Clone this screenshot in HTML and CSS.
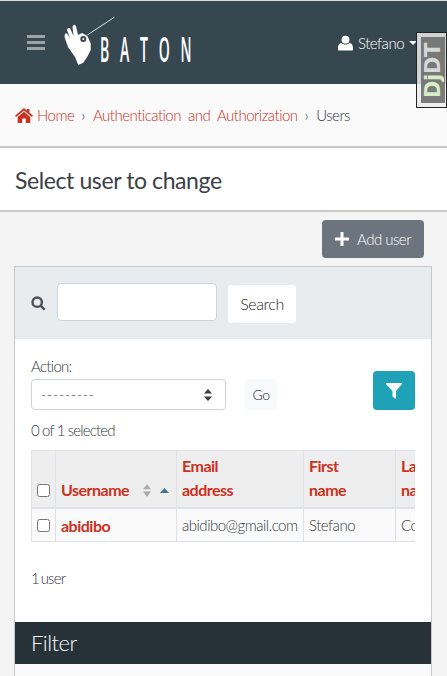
FILE: index.html
```html
<!DOCTYPE html>
<html lang="en">
<head>
    <meta charset="UTF-8">
    <meta name="viewport" content="width=device-width, initial-scale=1.0">
    <title>Select user to change</title>
    <link rel="stylesheet" href="styles.css">
</head>
<body>
    <nav class="navbar">
        <svg class="burger" viewBox="0 0 18 15" aria-hidden="true">
            <path d="M0 0h18v3H0zM0 6h18v3H0zM0 12h18v3H0z"/>
        </svg>
        <div class="logo">
            <svg class="logo-mark" viewBox="0 0 52 52" aria-hidden="true">
                <path class="logo-hand" fill-rule="evenodd" d="M14.300 51 L11 43 L4 33 L.5 23 L1 19.500 L3 19.500 L6 24 L3 16 L4 14 L6 14 L9.500 22 L8.500 12.500 L10 10.500 L12 12 L14 21 L18 19 L23.300 22 L26.700 29.300 L26.700 36 L23.300 42.700 L19.300 48.700 Z M16.300 25 A3 3 0 1 0 22.300 25 A3 3 0 1 0 16.300 25 Z"/>
                <circle class="logo-hand" cx="19.300" cy="25" r="1"/>
                <path class="logo-baton" d="M23.300 21 L50.300 3.300"/>
            </svg>
            <span class="logo-text">BATON</span>
        </div>
        <div class="user-menu">
            <svg class="user-icon" viewBox="0 0 16 16" aria-hidden="true">
                <circle cx="8" cy="4.400" r="4.200"/>
                <path d="M1 16 C0 16 0 15 0 14 C0 11 1 8.200 3.800 8 C5 9 6.400 9.600 8 9.600 C9.600 9.600 11 9 12.200 8 C15 8.200 16 11 16 14 C16 15 16 16 15 16 Z"/>
            </svg>
            <span>Stefano</span>
            <i class="caret"></i>
        </div>
    </nav>

    <div class="djdt"><span class="djdt-inner"><b>Dj</b>DT</span></div>

    <div class="breadcrumbs">
        <svg class="home-icon" viewBox="0 0 18 15" aria-hidden="true">
            <path d="M9 0 L11.800 2.400 V1 H14.400 V4.600 L18 7.700 L16.900 9 L9 2.400 L1.100 9 L0 7.700 Z M9 3.700 L15.300 9 V15 H10.800 V10.600 H7.200 V15 H2.700 V9 Z"/>
        </svg>
        <a href="#">Home</a>
        <span class="sep">›</span>
        <a href="#" class="wide">Authentication and Authorization</a>
        <span class="sep">›</span>
        <span>Users</span>
    </div>

    <header class="page-title">
        <h1>Select user to change</h1>
    </header>

    <main class="content">
        <div class="tools">
            <a href="#" class="btn-add">
                <svg viewBox="0 0 14 14" aria-hidden="true"><path d="M5.500 0h3v5.500H14v3H8.500V14h-3V8.500H0v-3h5.500z"/></svg>
                Add user
            </a>
        </div>

        <section class="card">
            <form class="search-bar">
                <svg class="search-icon" viewBox="0 0 15 15" aria-hidden="true">
                    <circle cx="6.200" cy="6.200" r="4.700"/>
                    <path d="M9.800 9.800 L13.600 13.600"/>
                </svg>
                <input type="text" class="search-input">
                <button type="button" class="btn-search">Search</button>
            </form>

            <div class="changelist">
                <div class="actions-row">
                    <div class="action-field">
                        <label for="action">Action:</label>
                        <div class="select" id="action">
                            <span>---------</span>
                            <svg viewBox="0 0 8 12" aria-hidden="true"><path d="M4 0 L8 4.500 H0 Z M0 7.500 H8 L4 12 Z"/></svg>
                        </div>
                    </div>
                    <button type="button" class="btn-go">Go</button>
                    <button type="button" class="btn-filter" aria-label="Filter">
                        <svg viewBox="0 0 16 16" aria-hidden="true"><path d="M0 0 H16 V1 L10 8 V16 L6.500 13.500 V8 L0 1 Z"/></svg>
                    </button>
                </div>
                <p class="counter">0 of 1 selected</p>

                <div class="table-wrap">
                    <table class="result-list">
                        <thead>
                            <tr>
                                <th class="col-check"><input type="checkbox"></th>
                                <th class="col-user">
                                    <div class="sort-head">
                                        <span>Username</span>
                                        <svg class="sort-both" viewBox="0 0 9 14" aria-hidden="true"><path d="M4.500 0 L9 5.500 H0 Z M0 8 H9 L4.500 14 Z"/></svg>
                                        <svg class="sort-up" viewBox="0 0 9 5" aria-hidden="true"><path d="M4.500 0 L9 5 H0 Z"/></svg>
                                    </div>
                                </th>
                                <th class="col-email">Email<br>address</th>
                                <th class="col-first">First<br>name</th>
                                <th class="col-last">Last<br>name</th>
                            </tr>
                        </thead>
                        <tbody>
                            <tr>
                                <td><input type="checkbox"></td>
                                <td><a href="#">abidibo</a></td>
                                <td>abidibo@gmail.com</td>
                                <td>Stefano</td>
                                <td>Contini</td>
                            </tr>
                        </tbody>
                    </table>
                </div>
                <p class="paginator">1 user</p>
            </div>

            <div class="filter-title">Filter</div>
            <div class="filter-body"></div>
        </section>
    </main>
</body>
</html>
```

FILE: styles.css
```css
body {
    margin: 0;
    font-family: Lato, "Open Sans", sans-serif;
    font-weight: 300;
    font-size: 15px;
    letter-spacing: -0.5px;
    color: #343a40;
    background-color: #f4f4f4;
}

a {
    color: #c9321f;
    text-decoration: none;
}

svg {
    display: block;
    flex: none;
}

/* navbar */
.navbar {
    display: flex;
    align-items: center;
    height: 83px;
    margin-top: 1px;
    padding: 0 0 0 27px;
    background-color: #37474f;
    box-shadow: 0 -1px 0 #ddd;
}

.burger {
    width: 18px;
    height: 15px;
    fill: #9ba3a7;
}

.logo {
    position: relative;
    width: 130px;
    height: 52px;
    margin-left: 19px;
    align-self: flex-start;
    margin-top: 13px;
}

.logo-mark {
    width: 52px;
    height: 52px;
}

.logo-hand {
    fill: #fff;
}

.logo-baton {
    stroke: #ddd;
    stroke-width: 1;
    fill: none;
}

/* the wordmark is a tall condensed face, squeezed from a normal one */
.logo-text {
    position: absolute;
    left: 36px;
    top: 0;
    color: #fff;
    font-family: "Open Sans", sans-serif;
    font-size: 35px;
    font-weight: 600;
    line-height: 69px;
    letter-spacing: 27px;
    white-space: nowrap;
    transform: scaleX(0.4);
    transform-origin: left top;
}

.user-menu {
    display: flex;
    align-items: center;
    margin-left: auto;
    margin-right: 30px;
    color: #fff;
}

.user-icon {
    width: 15px;
    height: 16px;
    margin-right: 5px;
    fill: #fff;
}

.caret {
    width: 0;
    height: 0;
    margin-left: 5px;
    border-top: 4px solid #fff;
    border-left: 4px solid transparent;
    border-right: 4px solid transparent;
}

/* debug toolbar handle */
.djdt {
    position: absolute;
    top: 32px;
    right: 0;
    width: 31px;
    height: 76px;
    box-sizing: border-box;
    padding: 4px 1px 4px 4px;
    border: 1px solid #222;
    background-color: rgba(235, 235, 235, 0.85);
}

.djdt-inner {
    display: flex;
    align-items: center;
    justify-content: flex-start;
    box-sizing: border-box;
    height: 100%;
    padding-top: 5px;
    writing-mode: vertical-rl;
    transform: rotate(180deg);
    background-color: rgba(110, 110, 110, 0.9);
    color: #d4d8d8;
    font-family: "DejaVu Sans", sans-serif;
    font-size: 21px;
    font-weight: 700;
    letter-spacing: -0.5px;
}

.djdt-inner b {
    color: #d9ecc8;
}

/* breadcrumbs */
.breadcrumbs {
    display: flex;
    align-items: center;
    box-sizing: border-box;
    height: 64px;
    padding-left: 15px;
    background-color: #fafafa;
    border-bottom: 2px solid #c8c8c8;
}

.home-icon {
    width: 18px;
    height: 15px;
    margin-right: 4px;
    fill: #c9321f;
}

.sep {
    margin: 0 8px 0 7px;
}

.wide {
    word-spacing: 3.500px;
}

/* title */
.page-title {
    box-sizing: border-box;
    height: 64px;
    padding: 1px 0 0 15px;
    display: flex;
    align-items: center;
    background-color: #fff;
    border-bottom: 2px solid #c8c8c8;
}

h1 {
    margin: 0;
    font-size: 23px;
    font-weight: 400;
    letter-spacing: -0.4px;
    color: #3a4046;
}

/* content */
.content {
    padding: 8px 15px 0 14px;
}

.tools {
    display: flex;
    justify-content: flex-end;
    padding-right: 8px;
    margin-bottom: 8px;
}

.btn-add {
    display: flex;
    align-items: center;
    gap: 8px;
    height: 38px;
    padding: 0 13px;
    border-radius: 4px;
    background-color: #6c757d;
    color: #fff;
}

.btn-add svg {
    width: 14px;
    height: 14px;
    fill: #fff;
}

.card {
    border: 1px solid #c8c8c8;
    border-bottom: none;
    background-color: #fff;
}

.search-bar {
    display: flex;
    align-items: center;
    height: 72px;
    padding-left: 16px;
    background-color: #e9ecef;
}

.search-icon {
    width: 15px;
    height: 15px;
    fill: none;
    stroke: #495057;
    stroke-width: 2.400;
}

.search-input {
    box-sizing: border-box;
    width: 160px;
    height: 38px;
    margin: -2px 0 0 11px;
    border: 1px solid #ced4da;
    border-radius: 4px;
    background-color: #fff;
}

.btn-search {
    height: 38px;
    width: 68px;
    margin: 2px 0 0 11px;
    padding: 0 0 2px;
    border: none;
    border-radius: 3px;
    background-color: #fff;
    color: #212529;
    font: inherit;
    font-size: 16px;
    letter-spacing: -0.4px;
}

.changelist {
    padding: 0 16px;
}

.actions-row {
    display: flex;
    align-items: flex-end;
    padding-top: 17px;
}

.action-field label {
    display: block;
    height: 23px;
    line-height: 21px;
    letter-spacing: -0.7px;
}

.select {
    display: flex;
    align-items: center;
    justify-content: space-between;
    box-sizing: border-box;
    width: 195px;
    height: 31px;
    padding: 0 13px 0 9px;
    border: 1px solid #ced4da;
    border-radius: 4px;
    font-size: 14px;
    letter-spacing: 0.8px;
}

.select svg {
    width: 8px;
    height: 12px;
    fill: #343a40;
}

.btn-go {
    width: 32px;
    height: 31px;
    margin-left: 19px;
    padding: 0;
    border: none;
    border-radius: 3px;
    background-color: #f8f9fa;
    color: #212529;
    font: inherit;
    font-size: 14px;
    letter-spacing: inherit;
}

.btn-filter {
    display: flex;
    align-items: center;
    justify-content: center;
    width: 42px;
    height: 39px;
    margin-left: auto;
    padding: 0;
    border: none;
    border-radius: 4px;
    background-color: #1fa2b8;
}

.btn-filter svg {
    width: 16px;
    height: 16px;
    fill: #fff;
}

.counter {
    height: 40px;
    margin: 0;
    line-height: 40px;
    letter-spacing: -0.85px;
}

.table-wrap {
    overflow: hidden;
}

.result-list {
    border-collapse: collapse;
    table-layout: fixed;
    width: 480px;
}

.result-list th, .result-list td {
    border: 1px solid #dee2e6;
    padding: 0 5px;
    text-align: left;
}

.result-list th {
    height: 51px;
    vertical-align: bottom;
    padding-bottom: 5px;
    line-height: 24px;
    background-color: #eee;
    border-bottom-width: 2px;
    color: #c9321f;
    font-weight: 700;
    font-size: 16px;
}

.result-list td {
    height: 32px;
    background-color: #fafafa;
}

.result-list td a {
    font-weight: 700;
    font-size: 16px;
}

.result-list input {
    display: block;
    width: 13px;
    height: 13px;
    margin: 0;
}

.result-list th input {
    margin-bottom: 5px;
}

.col-check { width: 13px; }
.col-user { width: 110px; }
.col-email { width: 116px; }
.col-first { width: 81px; }
.col-last { width: 105px; }

.sort-head {
    display: flex;
    align-items: center;
}

.sort-both {
    width: 8px;
    height: 13px;
    margin-left: auto;
    margin-right: 9px;
    fill: #aaa;
}

.sort-up {
    width: 9px;
    height: 5px;
    margin-right: 2px;
    fill: #417690;
}

.paginator {
    height: 80px;
    margin: 0;
    line-height: 73px;
    letter-spacing: -0.8px;
    word-spacing: -1.500px;
}

.filter-title {
    height: 42px;
    line-height: 42px;
    padding-left: 16px;
    background-color: #263238;
    color: #fff;
    font-size: 22px;
    letter-spacing: -0.5px;
}

.filter-body {
    height: 13px;
    background-color: #fafafa;
}
```
